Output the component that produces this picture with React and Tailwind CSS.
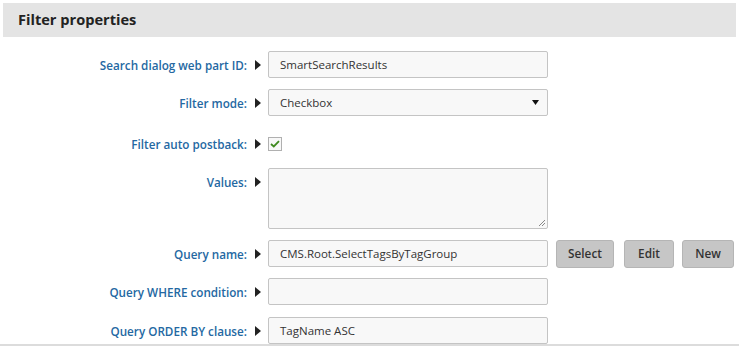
import React from "react";

const font = { fontFamily: '"Open Sans", "Noto Sans", Arial, sans-serif' };

function Arrow() {
  return (
    <svg width="6" height="10" viewBox="0 0 6 10" className="shrink-0">
      <path d="M0 0 L6 5 L0 10 Z" fill="#222" />
    </svg>
  );
}

function Row({ label, children, top = false, className = "" }) {
  return (
    <div className={`flex ${top ? "items-start" : "items-center h-[27px]"} ${className}`}>
      <div className={`w-[247px] text-right text-[11.7px] leading-[16px] font-semibold text-[#2468a2] ${top ? "pt-[6px]" : ""}`}>
        {label}
      </div>
      <div className={`w-[21px] flex justify-center ${top ? "pt-[9px]" : ""}`}>
        <Arrow />
      </div>
      {children}
    </div>
  );
}

function Input({ value }) {
  return (
    <div className="w-[280px] h-[27px] border border-[#c4c4c4] rounded-[2px] bg-[#f8f8f8] px-[11px] flex items-center text-[11.5px] text-[#333]">
      {value}
    </div>
  );
}

function Btn({ children, w }) {
  return (
    <div className={`${w} h-[28px] rounded-[3px] bg-[#c6c6c6] border border-[#b5b5b5] flex items-center justify-center text-[11.8px] font-semibold text-[#333]`}>
      {children}
    </div>
  );
}

export default function App() {
  return (
    <div className="w-[739px] h-[348px] bg-white relative overflow-hidden" style={font}>
      <div className="mx-[3px] mt-[3px] h-[34px] bg-[#e4e4e4] flex items-center pl-[15px]">
        <span className="text-[14.6px] font-bold text-[#222]">Filter properties</span>
      </div>
      <div className="flex flex-col">
        <Row label="Search dialog web part ID:" className="mt-[14px]">
          <Input value="SmartSearchResults" />
        </Row>
        <Row label="Filter mode:" className="mt-[11px]">
          <div className="w-[280px] h-[27px] border border-[#c4c4c4] rounded-[2px] bg-[#f8f8f8] pl-[11px] pr-[8px] flex items-center justify-between text-[11.5px] text-[#333]">
            <span>Checkbox</span>
            <svg width="7" height="5" viewBox="0 0 7 5"><path d="M0 0 L7 0 L3.5 5 Z" fill="#111" /></svg>
          </div>
        </Row>
        <Row label="Filter auto postback:" className="mt-[14px]">
          <div className="w-[14px] h-[14px] border border-[#b0b0b0] bg-[#f8f8f8] flex items-center justify-center">
            <svg width="10" height="8" viewBox="0 0 10 8"><path d="M1 4 L3.8 6.5 L9 1.2" stroke="#3f8a1f" strokeWidth="1.8" fill="none" /></svg>
          </div>
        </Row>
        <Row label="Values:" top className="mt-[11px]">
          <div className="w-[280px] h-[61px] border border-[#c4c4c4] rounded-[2px] bg-[#f8f8f8] relative">
            <svg width="8" height="8" viewBox="0 0 8 8" className="absolute right-[1px] bottom-[1px]">
              <path d="M7 1 L1 7 M7 4 L4 7" stroke="#888" strokeWidth="1" />
            </svg>
          </div>
        </Row>
        <Row label="Query name:" className="mt-[11px]">
          <Input value="CMS.Root.SelectTagsByTagGroup" />
          <div className="flex gap-[10px] ml-[8px]">
            <Btn w="w-[58px]">Select</Btn>
            <Btn w="w-[50px]">Edit</Btn>
          </div>
          <div className="ml-[8px]">
            <Btn w="w-[52px]">New</Btn>
          </div>
        </Row>
        <Row label="Query WHERE condition:" className="mt-[11px]">
          <Input value="" />
        </Row>
        <Row label="Query ORDER BY clause:" className="mt-[12px]">
          <Input value="TagName ASC" />
        </Row>
      </div>
      <div className="absolute left-0 right-0 bottom-[2px] h-[2px] bg-[#dcdcdc]" />
    </div>
  );
}
